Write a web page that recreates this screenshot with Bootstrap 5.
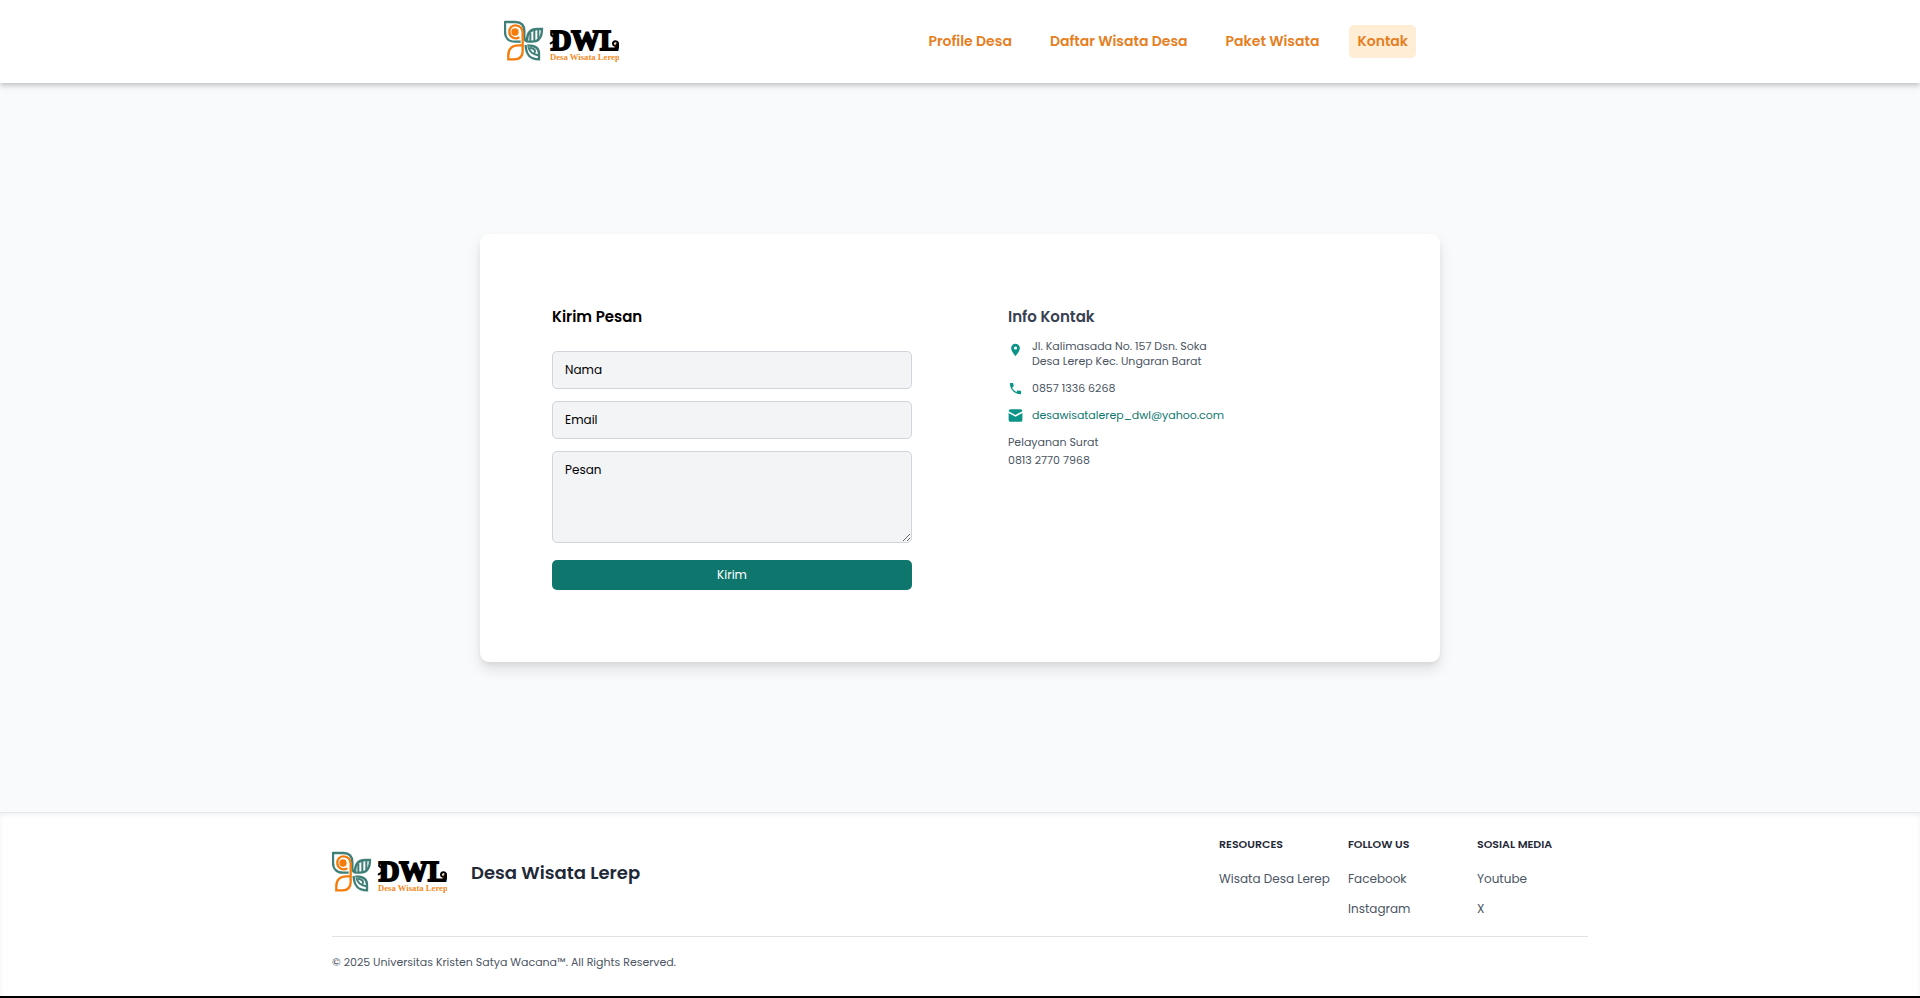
<!DOCTYPE html>
<html lang="id">
<head>
<meta charset="utf-8">
<meta name="viewport" content="width=device-width, initial-scale=1">
<title>Kontak - Desa Wisata Lerep</title>
<link href="https://cdn.jsdelivr.net/npm/bootstrap@5.3.0/dist/css/bootstrap.min.css" rel="stylesheet">
<style>
  body { font-family: Poppins, Inter, sans-serif; font-size: 12px; line-height: 18px; background: #f9fafb; color: #374151; border-bottom: 2px solid #000; }
  a { text-decoration: none; }
  .site-header { box-shadow: 0 2px 4px rgba(0,0,0,.12), 0 4px 6px rgba(0,0,0,.1); }
  .header-inner { max-width: 960px; height: 83px; }
  .main-nav { gap: 22px; }
  .main-nav .nav-link { color: #e67e22; font-size: 14px; line-height: 21px; font-weight: 600; padding: 6px 8px; border-radius: 5px; }
  .main-nav .nav-link.active { background: #ffedd5; }
  .brand-logo { width: 115px; height: 44px; display: block; }
  .contact-card { max-width: 960px; padding: 72px; border: 0; border-radius: 9px; box-shadow: 0 8px 14px rgba(0,0,0,.1), 0 3px 5px rgba(0,0,0,.05); }
  .contact-grid { display: grid; grid-template-columns: 1fr 1fr; gap: 96px; }
  .section-title { font-size: 15px; line-height: 21px; font-weight: 600; margin: 0; }
  .field-stack { gap: 12px; }
  .field { background: #f3f4f6; border: 1px solid #d1d5db; border-radius: 5px; font-size: 12px; line-height: 18px; padding: 9px 12px; color: #000; }
  .field::placeholder { color: #000; opacity: 1; }
  textarea.field { height: 92px; }
  .btn-send { background: #0f766e; color: #fff; border: 0; border-radius: 5px; font-size: 12px; line-height: 18px; padding: 6px; margin-top: 5px; }
  .btn-send:hover { background: #115e59; color: #fff; }
  .contact-info { font-size: 11px; line-height: 15px; color: #4b5563; }
  .contact-info address { line-height: 15px; }
  .contact-info svg { width: 15px; height: 15px; fill: #0d9488; flex: none; }
  .info-list { gap: 12px; }
  .info-row { gap: 9px; }
  .info-list .section-title { color: #374151; }
  .post-service { gap: 3px; }
  .mail-link { color: #0f766e; }
  .site-footer { border-top: 1px solid #e5e7eb; box-shadow: inset 0 2px 5px rgba(0,0,0,.06); padding: 23px 0 26px; }
  .footer-inner { max-width: 1256px; }
  .footer-brand { padding-bottom: 9px; }
  .footer-name { font-size: 18px; line-height: 27px; font-weight: 600; color: #1f2937; }
  .footer-links { display: grid; grid-template-columns: repeat(3, 111px); gap: 18px; }
  .footer-links h2 { font-size: 11px; line-height: 16px; font-weight: 600; color: #1f2937; margin: 0 0 18px; }
  .footer-links a { color: #4b5563; white-space: nowrap; }
  .footer-links ul { gap: 12px; }
  .footer-rule { border-top: 1px solid #d1d5db; margin: 18px 0; opacity: .7; }
  .copyright { font-size: 11px; line-height: 15px; color: #4b5563; }
</style>
</head>
<body class="min-vh-100 d-flex flex-column">

<svg class="d-none" aria-hidden="true">
  <symbol id="dwl-logo" viewBox="42 57 345 132">
    <g fill="none" stroke="#3f7f78" stroke-width="7">
      <path d="M45 63H76C94 63 103 74 103 91V108C103 117 107 122 116 122H126C148 122 156 108 156 84H142C120 84 111 96 111 119"/>
      <path d="M45 60V92C45 111 57 122 75 122H92"/>
      <path d="M107 132C108 161 119 175 147 175V157C147 140 136 133 112 133"/>
      <path d="M115 137C118 153 128 160 144 163" stroke-width="6"/>
      <path d="M120 140C135 142 138 150 133 157" stroke-width="6"/>
      <path d="M121 121V96M133 120V86M145 114V84" stroke-width="6"/>
    </g>
    <g fill="none" stroke="#f57c0a" stroke-width="7">
      <path d="M88 109C74 117 58 107 58 93C58 80 66 73 77 73C90 73 98 83 98 95V150C98 167 90 175 73 175H55V162C55 143 67 133 85 133H96"/>
      <circle cx="75" cy="93" r="11" fill="#f57c0a" stroke="none"/>
    </g>
    <text x="182" y="147" font-family="'Liberation Serif', serif" font-weight="700" font-size="86" fill="#000" stroke="#000" stroke-width="6">DWL</text>
    <g fill="none" stroke="#000" stroke-width="6" stroke-linecap="round">
      <path d="M196 91C182 90 180 103 189 106C197 108 200 99 195 97"/>
      <path d="M182 127L192 121"/>
      <path d="M378 147C389 138 386 120 376 121C367 122 367 133 374 134"/>
    </g>
    <text x="180" y="178" font-family="'Liberation Serif', serif" font-weight="700" font-size="26" fill="#f58a1f">Desa Wisata Lerep</text>
  </symbol>
</svg>

<header class="site-header bg-white position-relative">
  <div class="header-inner container-fluid px-4 d-flex align-items-center justify-content-between">
    <a href="#" aria-label="Desa Wisata Lerep"><svg class="brand-logo"><use href="#dwl-logo"/></svg></a>
    <nav class="nav main-nav">
      <a class="nav-link" href="#">Profile Desa</a>
      <a class="nav-link" href="#">Daftar Wisata Desa</a>
      <a class="nav-link" href="#">Paket Wisata</a>
      <a class="nav-link active" aria-current="page" href="#">Kontak</a>
    </nav>
  </div>
</header>

<main class="flex-grow-1 d-flex align-items-center justify-content-center">
  <div class="card contact-card w-100">
    <div class="contact-grid">
      <form>
        <h1 class="section-title text-black mb-4">Kirim Pesan</h1>
        <div class="d-grid field-stack">
          <input class="form-control field" type="text" name="nama" aria-label="Nama" placeholder="Nama">
          <input class="form-control field" type="email" name="email" aria-label="Email" placeholder="Email">
          <textarea class="form-control field" name="pesan" aria-label="Pesan" placeholder="Pesan"></textarea>
          <button class="btn btn-send" type="submit">Kirim</button>
        </div>
      </form>
      <section class="contact-info">
        <div class="info-list d-flex flex-column">
          <h2 class="section-title">Info Kontak</h2>
          <div class="info-row d-flex align-items-start">
            <svg class="mt-1" viewBox="0 0 24 24"><path d="M12 1C8.100 1 5 4.100 5 8c0 5.200 7 13 7 13s7-7.800 7-13c0-3.900-3.100-7-7-7zm0 9.500a2.500 2.500 0 110-5 2.500 2.500 0 010 5z"/></svg>
            <address class="mb-0">Jl. Kalimasada No. 157 Dsn. Soka<br>Desa Lerep Kec. Ungaran Barat</address>
          </div>
          <div class="info-row d-flex align-items-center">
            <svg viewBox="0 0 24 24"><path d="M6.600 10.800c1.400 2.800 3.800 5.100 6.600 6.600l2.200-2.200c.3-.3.700-.4 1-.2 1.100.4 2.300.6 3.600.6.600 0 1 .4 1 1V20c0 .6-.4 1-1 1C10.600 21 3 13.400 3 4c0-.6.400-1 1-1h3.500c.6 0 1 .4 1 1 0 1.300.2 2.500.6 3.600.1.300 0 .7-.2 1z"/></svg>
            <span>0857 1336 6268</span>
          </div>
          <div class="info-row d-flex align-items-center">
            <svg viewBox="0 0 24 24"><path d="M4 2h16a3 3 0 013 3L12 11 1 5a3 3 0 013-3zM1 8l11 6 11-6v11a3 3 0 01-3 3H4a3 3 0 01-3-3z"/></svg>
            <a class="mail-link" href="mailto:desawisatalerep_dwl@yahoo.com">desawisatalerep_dwl@yahoo.com</a>
          </div>
          <div class="post-service d-flex flex-column"><span>Pelayanan Surat</span><span>0813 2770 7968</span></div>
        </div>
      </section>
    </div>
  </div>
</main>

<footer class="site-footer bg-white">
  <div class="footer-inner container-fluid px-0">
    <div class="d-flex justify-content-between">
      <a class="footer-brand d-flex align-items-center gap-4" href="#">
        <svg class="brand-logo" aria-hidden="true"><use href="#dwl-logo"/></svg>
        <span class="footer-name">Desa Wisata Lerep</span>
      </a>
      <div class="footer-links">
        <div>
          <h2>RESOURCES</h2>
          <ul class="list-unstyled d-flex flex-column mb-0"><li><a href="#">Wisata Desa Lerep</a></li></ul>
        </div>
        <div>
          <h2>FOLLOW US</h2>
          <ul class="list-unstyled d-flex flex-column mb-0"><li><a href="#">Facebook</a></li><li><a href="#">Instagram</a></li></ul>
        </div>
        <div>
          <h2>SOSIAL MEDIA</h2>
          <ul class="list-unstyled d-flex flex-column mb-0"><li><a href="#">Youtube</a></li><li><a href="#">X</a></li></ul>
        </div>
      </div>
    </div>
    <hr class="footer-rule">
    <div class="copyright">© 2025 Universitas Kristen Satya Wacana™. All Rights Reserved.</div>
  </div>
</footer>
<script src="https://cdn.jsdelivr.net/npm/bootstrap@5.3.0/dist/js/bootstrap.bundle.min.js"></script>
</body>
</html>
